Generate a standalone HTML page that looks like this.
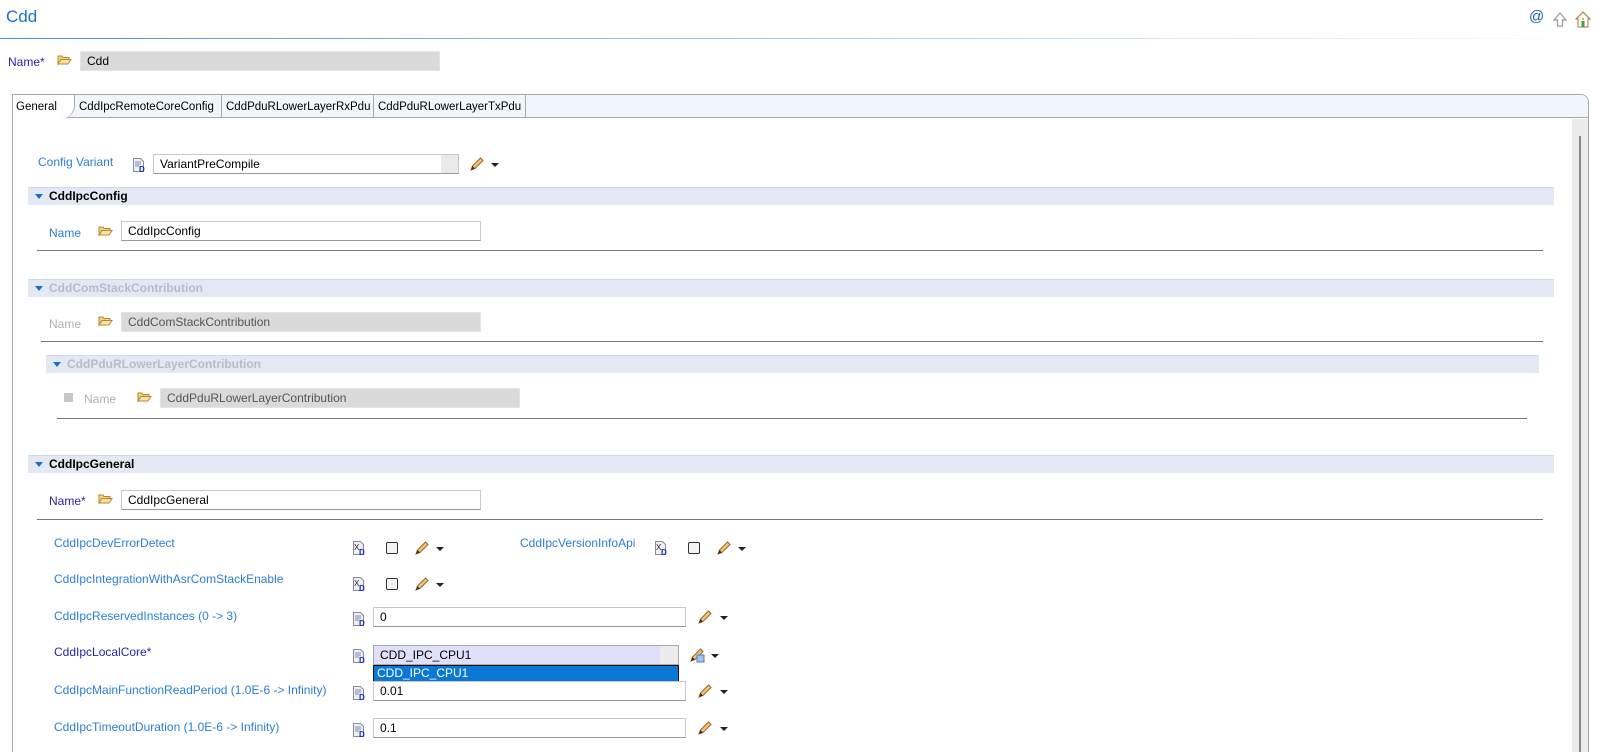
<!DOCTYPE html>
<html><head><meta charset="utf-8"><style>
*{margin:0;padding:0;box-sizing:border-box}
html,body{width:1602px;height:752px;overflow:hidden}
body{background:#fff;font-family:"Liberation Sans",sans-serif;font-size:12px;color:#000;position:relative}
.a{position:absolute;white-space:nowrap;line-height:14px}
.lbl{color:#2a7fd6}
.dis{color:#b0b0b0}
.f{position:absolute;border:1px solid #c8c8c8;border-bottom-color:#999;background:#fff;padding-left:6px;line-height:18px;height:20px}
.g{background:#dadada;border-color:#e4e4e4}
.hdr{position:absolute;height:18px;background:#e2e9f3;border-top:1px solid #d0dae8;font-weight:bold;line-height:17px;padding-left:21px}
.hdr:before{content:"";position:absolute;left:7px;top:6px;border-left:4px solid transparent;border-right:4px solid transparent;border-top:5px solid #1b6fc8}
.ln{position:absolute;height:1px;background:#777}
.arr{position:absolute;width:0;height:0;border-left:4px solid transparent;border-right:4px solid transparent;border-top:4px solid #222}
.cb{position:absolute;width:12px;height:12px;border:1px solid #333;border-radius:2px;background:#f4f4f4}
.ic{position:absolute}
.tab{font-size:11.5px}
</style></head><body>
<svg width="0" height="0" style="position:absolute">
<defs>
<g id="fold"><path d="M1 3h4l1 1.5h6v2H4L1 11z" fill="#f2d28a" stroke="#b88a2a" stroke-width="1"/><path d="M4 6.5h10l-3 4.5H1z" fill="#fbe3a8" stroke="#b88a2a" stroke-width="1"/></g>
<g id="pen"><path d="M2 14l1.5-4 8-8 2.5 2.5-8 8z" fill="#f2c27a" stroke="#a0661e" stroke-width="1"/><path d="M2 14l1.5-4 2.5 2.5z" fill="#333"/></g>
<g id="doc"><path d="M1.5 1.5h7l3 3v10h-10z" fill="#eef0f6" stroke="#8a8a9a"/><path d="M3 5h6M3 7h6M3 9h4" stroke="#7a8ab0"/><text x="7" y="15" font-size="8" font-weight="bold" fill="#1a2ab0" font-family="Liberation Sans">D</text></g>
<g id="xd"><path d="M1.5 1.5h7l3 3v10h-10z" fill="#eef0f6" stroke="#8a8a9a"/><text x="2" y="10" font-size="8" fill="#223" font-family="Liberation Sans">X</text><text x="7" y="15" font-size="8" font-weight="bold" fill="#1a2ab0" font-family="Liberation Sans">D</text></g>
</defs></svg>

<div class="a" style="left:6px;top:7px;font-size:17px;line-height:20px;color:#1a6fd0">Cdd</div>
<div style="position:absolute;left:0;top:38px;width:1602px;height:1px;background:linear-gradient(90deg,#4a8fd8,#cfe2f6 70%,#fff)"></div>
<div class="a" style="left:1529px;top:10px;font-size:15px;color:#1a5fb0">@</div>
<svg class="ic" style="left:1553px;top:12px" width="14" height="16"><path d="M7 1L1 8h3.5v6h5V8H13z" fill="#fff" stroke="#999" stroke-width="1.2"/></svg>
<svg class="ic" style="left:1575px;top:11px" width="16" height="18"><path d="M8 1L1 8h2v8h10V8h2z" fill="#fff" stroke="#a07a40"/><rect x="6.5" y="10" width="3" height="6" fill="#3aa63a"/><rect x="7" y="7" width="2" height="2" fill="#e0c020"/></svg>

<div class="a" style="left:8px;top:55px;color:#2a1fa8">Name*</div>
<svg class="ic" style="left:57px;top:53px" width="16" height="14"><use href="#fold"/></svg>
<div class="f g" style="left:80px;top:51px;width:360px">Cdd</div>

<!-- tab panel -->
<div style="position:absolute;left:12px;top:94px;width:1577px;height:680px;border:1px solid #a8a8a8;border-radius:0 8px 0 0"></div>
<div style="position:absolute;left:13px;top:95px;width:1575px;height:23px;background:#f1f5fc;border-bottom:1px solid #a8a8a8;border-radius:0 7px 0 0"></div>
<div style="position:absolute;left:13px;top:95px;width:62px;height:24px;background:#fff;border-right:1px solid #a8a8a8;border-radius:0 0 14px 0"></div>
<div class="a tab" style="left:16px;top:100px">General</div>
<div style="position:absolute;left:221px;top:95px;width:1px;height:23px;background:#a8a8a8"></div>
<div style="position:absolute;left:373px;top:95px;width:1px;height:23px;background:#a8a8a8"></div>
<div style="position:absolute;left:525px;top:95px;width:1px;height:23px;background:#a8a8a8"></div>
<div class="a tab" style="left:79px;top:100px">CddIpcRemoteCoreConfig</div>
<div class="a tab" style="left:226px;top:100px">CddPduRLowerLayerRxPdu</div>
<div class="a tab" style="left:378px;top:100px">CddPduRLowerLayerTxPdu</div>
<div style="position:absolute;left:1572px;top:119px;width:16px;height:633px;background:#ececec"></div>
<div style="position:absolute;left:1579px;top:136px;width:2px;height:616px;background:#888"></div>

<div class="a lbl" style="left:38px;top:155px">Config Variant</div>
<svg class="ic" style="left:132px;top:157px" width="14" height="16"><use href="#doc"/></svg>
<div class="f" style="left:153px;top:154px;width:306px">VariantPreCompile<div style="position:absolute;right:0;top:0;width:17px;height:18px;background:#eaeaea"></div></div>
<svg class="ic" style="left:469px;top:156px" width="16" height="16"><use href="#pen"/></svg>
<div class="arr" style="left:491px;top:163px"></div>

<div class="hdr" style="left:28px;top:187px;width:1526px">CddIpcConfig</div>
<div class="a lbl" style="left:49px;top:226px">Name</div>
<svg class="ic" style="left:98px;top:224px" width="16" height="14"><use href="#fold"/></svg>
<div class="f" style="left:121px;top:221px;width:360px">CddIpcConfig</div>
<div class="ln" style="left:37px;top:250px;width:1506px"></div>

<div class="hdr dis" style="left:28px;top:279px;width:1526px;color:#b8bcc4">CddComStackContribution</div>
<div class="a dis" style="left:49px;top:317px">Name</div>
<svg class="ic" style="left:98px;top:314px" width="16" height="14"><use href="#fold"/></svg>
<div class="f g" style="left:121px;top:312px;width:360px;color:#555">CddComStackContribution</div>
<div class="ln" style="left:41px;top:341px;width:1502px"></div>

<div class="hdr dis" style="left:46px;top:355px;width:1493px;color:#b8bcc4">CddPduRLowerLayerContribution</div>
<div style="position:absolute;left:64px;top:393px;width:9px;height:9px;background:#c8c8c8"></div>
<div class="a dis" style="left:84px;top:392px">Name</div>
<svg class="ic" style="left:137px;top:390px" width="16" height="14"><use href="#fold"/></svg>
<div class="f g" style="left:160px;top:388px;width:360px;color:#555">CddPduRLowerLayerContribution</div>
<div class="ln" style="left:57px;top:418px;width:1470px"></div>

<div class="hdr" style="left:28px;top:455px;width:1526px">CddIpcGeneral</div>
<div class="a" style="left:49px;top:494px;color:#2a1fa8">Name*</div>
<svg class="ic" style="left:98px;top:492px" width="16" height="14"><use href="#fold"/></svg>
<div class="f" style="left:121px;top:490px;width:360px">CddIpcGeneral</div>
<div class="ln" style="left:37px;top:519px;width:1506px"></div>

<div class="a lbl" style="left:54px;top:536px">CddIpcDevErrorDetect</div>
<svg class="ic" style="left:352px;top:540px" width="14" height="16"><use href="#xd"/></svg>
<div class="cb" style="left:386px;top:542px"></div>
<svg class="ic" style="left:414px;top:540px" width="16" height="16"><use href="#pen"/></svg>
<div class="arr" style="left:436px;top:547px"></div>
<div class="a lbl" style="left:520px;top:536px">CddIpcVersionInfoApi</div>
<svg class="ic" style="left:654px;top:540px" width="14" height="16"><use href="#xd"/></svg>
<div class="cb" style="left:688px;top:542px"></div>
<svg class="ic" style="left:716px;top:540px" width="16" height="16"><use href="#pen"/></svg>
<div class="arr" style="left:738px;top:547px"></div>

<div class="a lbl" style="left:54px;top:572px">CddIpcIntegrationWithAsrComStackEnable</div>
<svg class="ic" style="left:352px;top:576px" width="14" height="16"><use href="#xd"/></svg>
<div class="cb" style="left:386px;top:578px"></div>
<svg class="ic" style="left:414px;top:576px" width="16" height="16"><use href="#pen"/></svg>
<div class="arr" style="left:436px;top:583px"></div>

<div class="a lbl" style="left:54px;top:609px">CddIpcReservedInstances (0 -&gt; 3)</div>
<svg class="ic" style="left:352px;top:611px" width="14" height="16"><use href="#doc"/></svg>
<div class="f" style="left:373px;top:607px;width:313px">0</div>
<svg class="ic" style="left:697px;top:609px" width="16" height="16"><use href="#pen"/></svg>
<div class="arr" style="left:720px;top:616px"></div>

<div class="a" style="left:54px;top:645px;color:#2a1fa8">CddIpcLocalCore*</div>
<svg class="ic" style="left:352px;top:648px" width="14" height="16"><use href="#doc"/></svg>
<div class="f" style="left:373px;top:645px;width:306px;background:#e0e0fc;border-color:#aaa">CDD_IPC_CPU1<div style="position:absolute;right:0;top:0;width:18px;height:18px;background:#ececec"></div></div>
<div style="position:absolute;left:373px;top:665px;width:306px;height:17px;background:#0a78d4;border:1px solid #111;color:#fff;line-height:15px;padding-left:3px">CDD_IPC_CPU1</div>
<svg class="ic" style="left:689px;top:647px" width="16" height="16"><use href="#pen"/><rect x="8" y="8" width="7" height="7" fill="#9ec4e8" stroke="#5a7ab0"/></svg>
<div class="arr" style="left:711px;top:654px"></div>

<div class="a lbl" style="left:54px;top:683px">CddIpcMainFunctionReadPeriod (1.0E-6 -&gt; Infinity)</div>
<svg class="ic" style="left:352px;top:685px" width="14" height="16"><use href="#doc"/></svg>
<div class="f" style="left:373px;top:681px;width:313px">0.01</div>
<svg class="ic" style="left:697px;top:683px" width="16" height="16"><use href="#pen"/></svg>
<div class="arr" style="left:720px;top:690px"></div>

<div class="a lbl" style="left:54px;top:720px">CddIpcTimeoutDuration (1.0E-6 -&gt; Infinity)</div>
<svg class="ic" style="left:352px;top:722px" width="14" height="16"><use href="#doc"/></svg>
<div class="f" style="left:373px;top:718px;width:313px">0.1</div>
<svg class="ic" style="left:697px;top:720px" width="16" height="16"><use href="#pen"/></svg>
<div class="arr" style="left:720px;top:727px"></div>
</body></html>
